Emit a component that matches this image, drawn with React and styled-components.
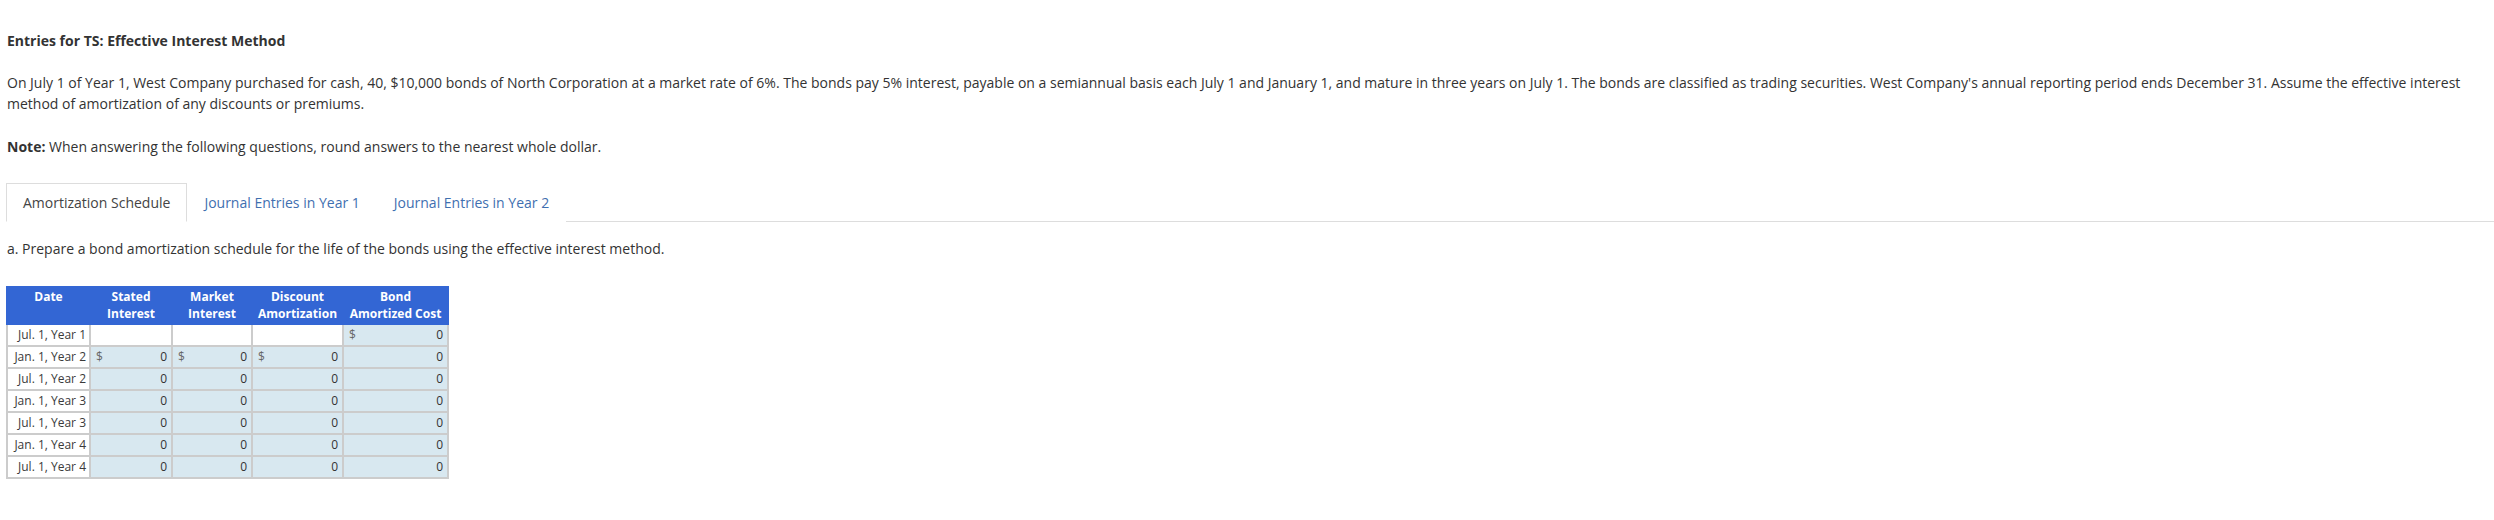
import React from "react";
import styled, { createGlobalStyle } from "styled-components";

const Global = createGlobalStyle`
  html, body { margin: 0; padding: 0; background: #fff; }
  body { font-family: "Open Sans", "Liberation Sans", sans-serif; color: #333; }
`;

const Page = styled.div`
  padding: 30px 0 40px 6px;
  font-size: 14px;
  line-height: 21px;
`;

const Title = styled.div`
  font-weight: 700;
  color: #333;
  padding-left: 1px;
`;

const Para = styled.p`
  margin: ${(p) => p.$top || 21}px 0 0 0;
  padding-left: 1px;
  padding-right: 6px;
  color: #333;
`;

const Strong = styled.strong`
  font-weight: 700;
`;

const TabList = styled.div`
  display: flex;
  margin-top: 26px;
  border-bottom: 1px solid #dddddd;
`;

const Tab = styled.div`
  padding: 8px 16px;
  border: 1px solid ${(p) => (p.$active ? "#dddddd" : "transparent")};
  border-bottom-color: ${(p) => (p.$active ? "#ffffff" : "transparent")};
  margin-bottom: -1px;
  background: #fff;
  color: ${(p) => (p.$active ? "#444" : "#3f6fb0")};
  white-space: nowrap;
`;

const Instruction = styled.p`
  margin: 16px 0 0 0;
  padding-left: 1px;
  color: #333;
`;

const Table = styled.table`
  margin-top: 27px;
  border-collapse: collapse;
  table-layout: fixed;
  width: 443px;
  font-size: 12px;
`;

const Col = styled.col`
  width: ${(p) => p.$w}px;
`;

const Th = styled.th`
  background: #3366d4;
  color: #fff;
  font-weight: 700;
  line-height: 17px;
  padding: 2px 2px 1px;
  border: 2px solid #3366d4;
  border-top: 0;
  text-align: center;
  vertical-align: top;
`;

const DateCell = styled.td`
  background: #fff;
  border: 2px solid #cccccc;
  height: 20px;
  padding: 0 3px 0 2px;
  line-height: 20px;
  text-align: right;
  color: #3a3a3a;
  white-space: nowrap;
`;

const ValueCell = styled.td`
  background: ${(p) => (p.$empty ? "#ffffff" : "#d8e8f0")};
  border: 2px solid #cccccc;
  height: 20px;
  padding: 0 4px 0 4px;
  line-height: 20px;
  color: #333;
`;

const ValueInner = styled.div`
  display: flex;
  justify-content: space-between;
  align-items: center;
`;

const Dollar = styled.span`
  color: #666;
  padding-left: 1px;
`;

const Amount = styled.span`
  margin-left: auto;
`;

const rows = [
  { date: "Jul. 1, Year 1", first: true },
  { date: "Jan. 1, Year 2", dollars: true },
  { date: "Jul. 1, Year 2" },
  { date: "Jan. 1, Year 3" },
  { date: "Jul. 1, Year 3" },
  { date: "Jan. 1, Year 4" },
  { date: "Jul. 1, Year 4" },
];

function Value({ empty, dollar }) {
  if (empty) return <ValueCell $empty />;
  return (
    <ValueCell>
      <ValueInner>
        {dollar && <Dollar>$</Dollar>}
        <Amount>0</Amount>
      </ValueInner>
    </ValueCell>
  );
}

export default function App() {
  return (
    <>
      <Global />
      <Page>
        <Title>Entries for TS: Effective Interest Method</Title>
        <Para>
          On July 1 of Year 1, West Company purchased for cash, 40, $10,000 bonds of North Corporation at a market rate of 6%. The bonds pay 5% interest, payable on a semiannual basis each July 1 and January 1, and mature in three years on July 1. The bonds are classified as trading securities. West Company's annual reporting period ends December 31. Assume the effective interest method of amortization of any discounts or premiums.
        </Para>
        <Para $top={22}>
          <Strong>Note:</Strong> When answering the following questions, round answers to the nearest whole dollar.
        </Para>
        <TabList>
          <Tab $active>Amortization Schedule</Tab>
          <Tab>Journal Entries in Year 1</Tab>
          <Tab>Journal Entries in Year 2</Tab>
        </TabList>
        <Instruction>
          a. Prepare a bond amortization schedule for the life of the bonds using the effective interest method.
        </Instruction>
        <Table>
          <colgroup>
            <Col $w={83} />
            <Col $w={82} />
            <Col $w={80} />
            <Col $w={91} />
            <Col $w={105} />
          </colgroup>
          <thead>
            <tr>
              <Th>Date</Th>
              <Th>Stated<br />Interest</Th>
              <Th>Market<br />Interest</Th>
              <Th>Discount<br />Amortization</Th>
              <Th>Bond<br />Amortized Cost</Th>
            </tr>
          </thead>
          <tbody>
            {rows.map((r) => (
              <tr key={r.date}>
                <DateCell>{r.date}</DateCell>
                <Value empty={r.first} dollar={r.dollars} />
                <Value empty={r.first} dollar={r.dollars} />
                <Value empty={r.first} dollar={r.dollars} />
                <Value dollar={r.first} />
              </tr>
            ))}
          </tbody>
        </Table>
      </Page>
    </>
  );
}
